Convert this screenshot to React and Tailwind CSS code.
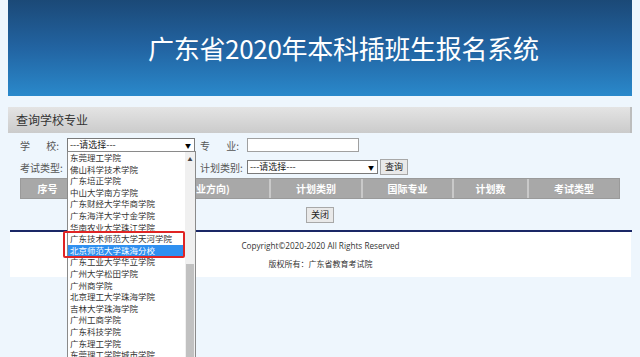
import React from 'react';

// 广东省插班生报名系统 — 查询学校专业, school dropdown open.

const SCHOOLS = [
  '东莞理工学院',
  '佛山科学技术学院',
  '广东培正学院',
  '中山大学南方学院',
  '广东财经大学华商学院',
  '广东海洋大学寸金学院',
  '华南农业大学珠江学院',
  '广东技术师范大学天河学院',
  '北京师范大学珠海分校',
  '广东工业大学华立学院',
  '广州大学松田学院',
  '广州商学院',
  '北京理工大学珠海学院',
  '吉林大学珠海学院',
  '广州工商学院',
  '广东科技学院',
  '广东理工学院',
  '东莞理工学院城市学院',
];

const COLUMNS = [
  { label: '序号', w: 'w-[55px]' },
  { label: '学校', w: 'w-[47px]' },
  { label: '专业(专业方向)', w: 'w-[148px]' },
  { label: '计划类别', w: 'w-[92px]' },
  { label: '国际专业', w: 'w-[91px]' },
  { label: '计划数', w: 'w-[75px]' },
  { label: '考试类型', w: 'flex-1' },
];

const cjk = { fontFamily: '"Noto Sans CJK SC", "Noto Sans", sans-serif' };

function Select({ className, text = '---请选择---' }) {
  return (
    <div
      className={
        'h-[14px] bg-white border border-[#7a7a7a] flex items-center justify-between pl-[2px] pr-[3px] text-[9px] text-[#222] ' +
        className
      }
    >
      <span>{text}</span>
      <span className="text-[6px] text-black">▼</span>
    </div>
  );
}

export default function App() {
  return (
    <div className="relative h-[357px] w-[640px] overflow-hidden bg-[#eef6fd]" style={cjk}>
      <div className="mx-2">
        {/* Banner */}
        <div className="h-[96px] bg-gradient-to-b from-[#1b4977] via-[#2264a2] to-[#2a89cb] flex items-center pl-[140px]">
          <h1 className="text-[26px] text-white leading-none tracking-[-0.3px]">
            广东省2020年本科插班生报名系统
          </h1>
        </div>

        {/* Section bar */}
        <div className="mt-[11px] h-[26px] bg-gradient-to-b from-[#e4e4e4] to-[#cbcbcb] flex items-center pl-[8px] border-r-[2px] border-[#bdbdbd]">
          <span className="text-[12px] text-[#333]">查询学校专业</span>
        </div>

        {/* Form */}
        <div className="pt-[5px] px-[12px] text-[10px] text-[#555]">
          <div className="flex items-center h-[14px]">
            <span className="w-[47px] flex justify-between pr-[8px]">
              <span>学</span>
              <span>校:</span>
            </span>
            <Select className="w-[128px]" />
            <span className="ml-[5px] w-[47px] flex justify-between pr-[8px]">
              <span>专</span>
              <span>业:</span>
            </span>
            <div className="w-[112px] h-[14px] bg-white border border-[#a0a0a0]" />
          </div>

          <div className="mt-[7px] flex items-center h-[16px]">
            <span className="w-[47px]">考试类型:</span>
            <Select className="w-[128px]" />
            <span className="ml-[5px] w-[47px]">计划类别:</span>
            <Select className="w-[131px]" />
            <button className="ml-[2px] h-[16px] px-[4px] bg-[#e9e9e9] border border-[#a8a8a8] text-[9px] text-[#222]">
              查询
            </button>
          </div>

          {/* Table header */}
          <div className="mt-[3px] h-[21px] w-[600px] flex bg-[#a8a8a8] border border-[#9a9a9a]">
            {COLUMNS.map((c, i) => (
              <div
                key={c.label}
                className={
                  c.w +
                  ' flex items-center justify-center text-[10px] font-bold text-white ' +
                  (i < COLUMNS.length - 1 ? 'border-r-2 border-[#c9c9c9]' : '')
                }
              >
                {c.label}
              </div>
            ))}
          </div>

          <div className="mt-[8px] flex justify-center">
            <button className="h-[16px] px-[4px] bg-[#e9e9e9] border border-[#a8a8a8] text-[9px] text-[#222]">
              关闭
            </button>
          </div>
        </div>

        {/* Footer */}
        <div className="mt-[7px] ml-[2px] h-[2px] bg-[#1a2766]" />
        <div className="ml-[2px] mr-[1px] h-[45px] bg-white flex flex-col items-center pt-[8px] text-[#333]">
          <span
            className="text-[8.2px] leading-[12px]"
            style={{ fontFamily: '"Open Sans", "Liberation Sans", sans-serif' }}
          >
            Copyright©2020-2020 All Rights Reserved
          </span>
          <span className="mt-[6px] text-[8px] leading-[12px]">版权所有：广东省教育考试院</span>
        </div>
      </div>

      {/* Open dropdown list */}
      <div className="absolute left-[67px] top-[151px] w-[129px] h-[210px] bg-white border border-[#8a8a8a] flex">
        <ul className="flex-1">
          {SCHOOLS.map((s) => {
            const active = s === '北京师范大学珠海分校';
            return (
              <li
                key={s}
                className={
                  'h-[11.6px] leading-[11.6px] pl-[2px] text-[8.5px] ' +
                  (active ? 'bg-[#2f90f0] text-white' : 'text-[#333]')
                }
              >
                {s}
              </li>
            );
          })}
        </ul>
        <div className="w-[10px] bg-[#f0f0f0] flex flex-col items-center">
          <span className="mt-[3px] text-[5px] text-[#444]">▲</span>
          <div className="mt-[101px] w-[8px] flex-1 bg-[#c1c1c1]" />
        </div>
      </div>

      {/* Red highlight box */}
      <div className="absolute left-[63px] top-[231px] w-[122px] h-[27px] border-2 border-[#e02424] rounded-[2px]" />
    </div>
  );
}
